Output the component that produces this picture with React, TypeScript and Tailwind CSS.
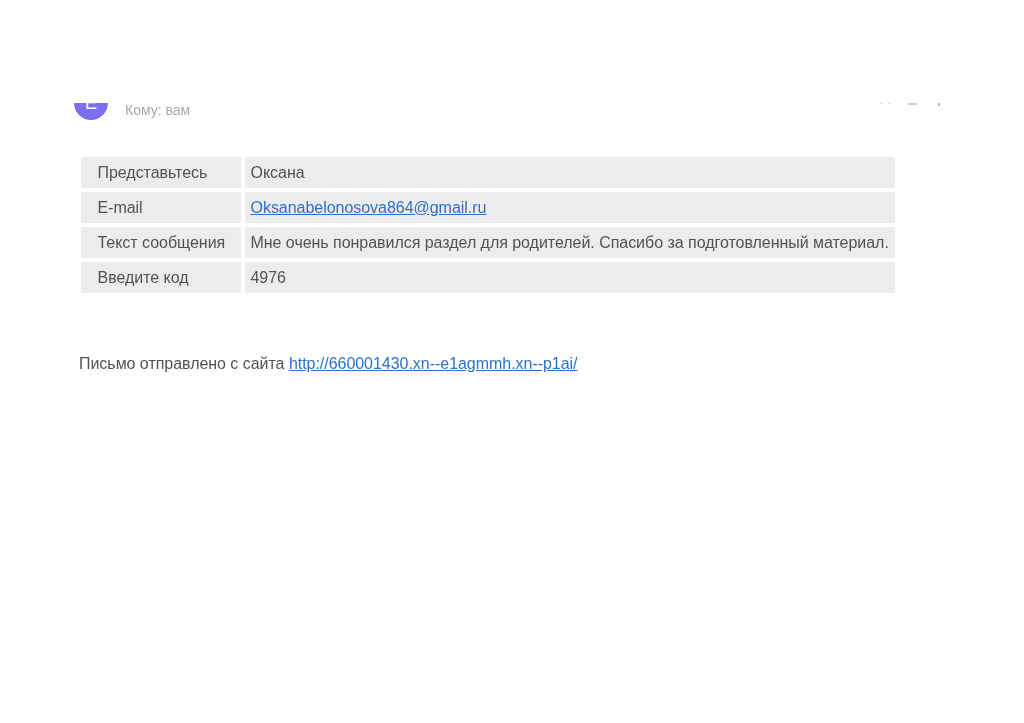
const rows = [
  { label: "Представьтесь", value: "Оксана" },
  { label: "E-mail", value: "Oksanabelonosova864@gmail.ru", href: "#" },
  { label: "Текст сообщения", value: "Мне очень понравился раздел для родителей. Спасибо за подготовленный материал." },
  { label: "Введите код", value: "4976" },
];

function Header() {
  return (
    <div className="flex h-[27px] overflow-hidden pl-[74px] pr-[84px]">
      <div className="-mt-[17px] flex h-[34px] w-[34px] shrink-0 items-center justify-center rounded-full bg-[#7b6ff0] text-lg leading-none text-white">
        E
      </div>
      <div className="ml-[17px] -mt-px text-[14px] leading-[16px] tracking-[-0.02px] text-[#a8a8a8]">Кому: вам</div>
      <div className="ml-auto flex gap-[18px]">
        <div className="-mt-[3px] flex gap-[6px]">
          <span className="h-[4px] w-[2px] bg-[#e0e0e0]" />
          <span className="h-[4px] w-[2px] bg-[#e0e0e0]" />
        </div>
        <span className="h-[2px] w-[9px] bg-[#d0d0d0]" />
        <span className="ml-[3px] h-[3px] w-[2px] bg-[#b8b8b8]" />
      </div>
    </div>
  );
}

export default function App() {
  return (
    <div className="min-h-[723px] bg-white pt-[103px] font-['Liberation_Sans',Arial,sans-serif] blur-[0.45px]">
      <Header />
      <div className="ml-[81px] mt-[27px] grid w-[814px] grid-cols-[160px_650px] gap-x-[4px] gap-y-[4px] text-[16px] tracking-[-0.035px] text-[#525252]">
        {rows.map((r) => (
          <div key={r.label} className="contents">
            <div className="flex h-[31px] items-center bg-[#ececec] pl-[16.5px]">{r.label}</div>
            <div className="flex h-[31px] items-center whitespace-nowrap bg-[#ececec] pl-[5.5px]">
              {r.href ? (
                <a href={r.href} className="text-[#2a72c8] underline">{r.value}</a>
              ) : (
                r.value
              )}
            </div>
          </div>
        ))}
      </div>
      <p className="ml-[79px] mt-[62px] text-[16px] leading-[18px] tracking-[-0.035px] text-[#525252]">
        Письмо отправлено с сайта{" "}
        <a href="#" className="text-[#2a72c8] underline">http://660001430.xn--e1agmmh.xn--p1ai/</a>
      </p>
    </div>
  );
}
